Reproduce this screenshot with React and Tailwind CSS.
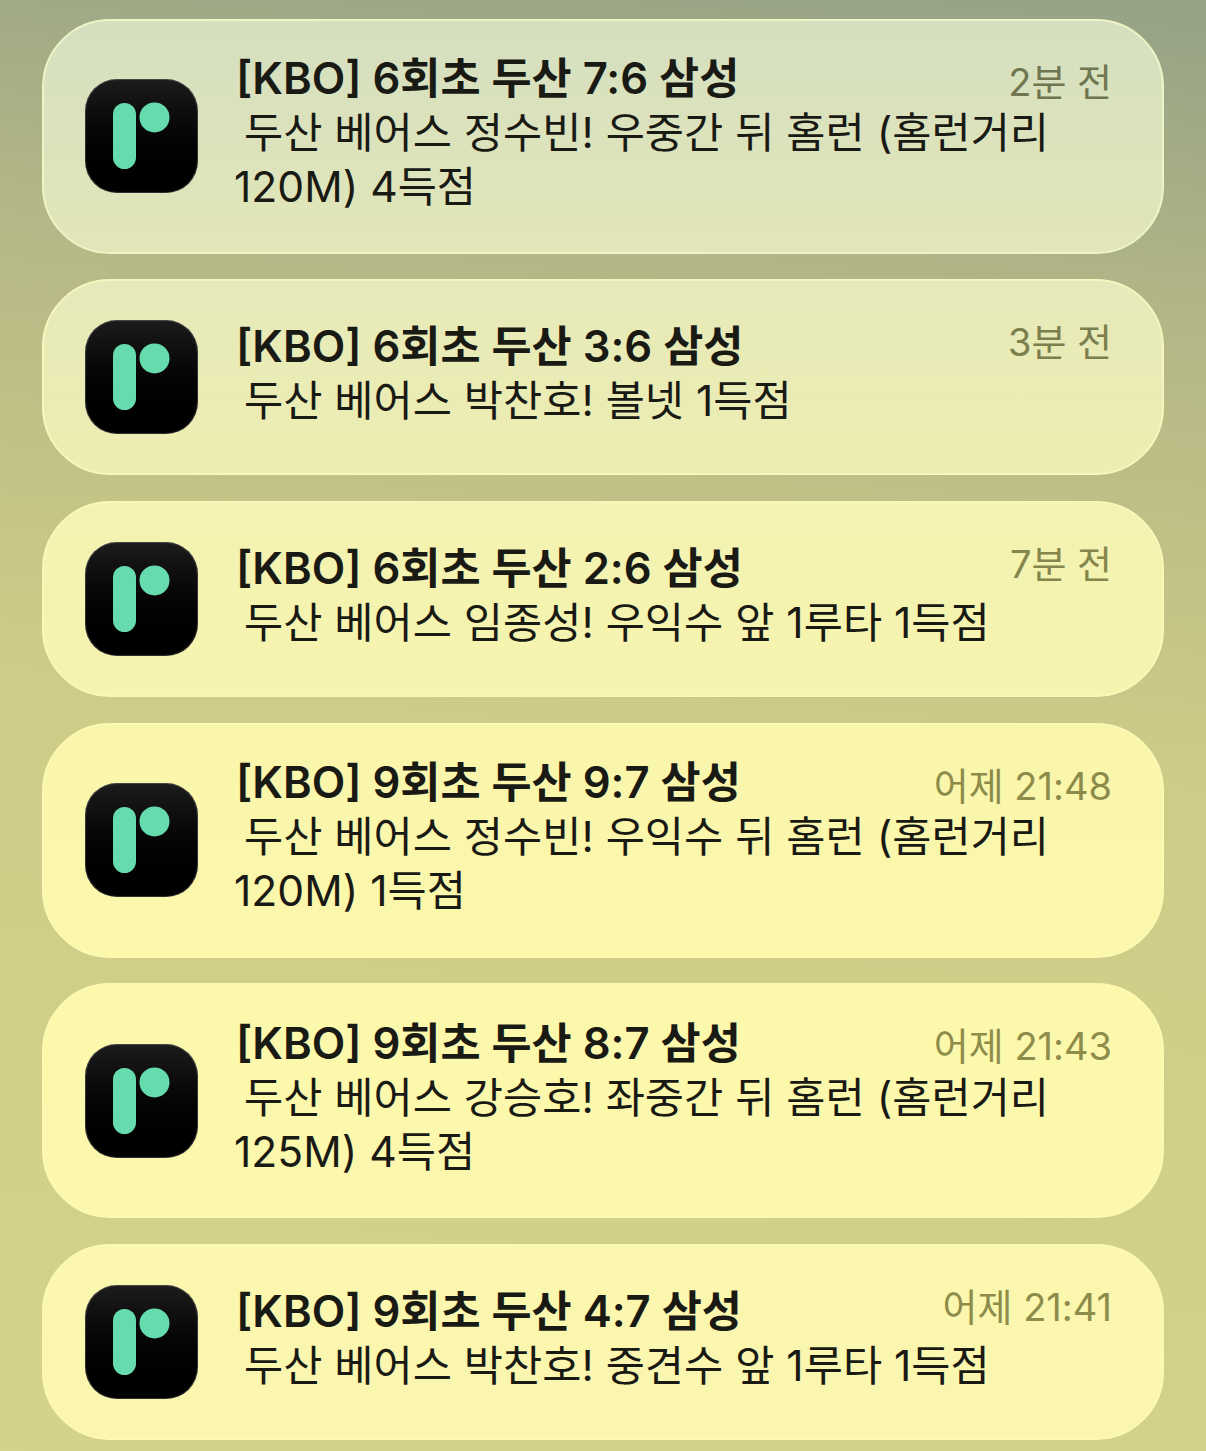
import React from "react";

const notifications = [
  {
    title: "[KBO] 6회초 두산 7:6 삼성",
    body: " 두산 베어스 정수빈! 우중간 뒤 홈런 (홈런거리 120M) 4득점",
    time: "2분 전",
    card: "from-[#d5dfc0] to-[#e2e6b8] border-[#edf4c6]",
    timeColor: "text-[#6f7650]",
  },
  {
    title: "[KBO] 6회초 두산 3:6 삼성",
    body: " 두산 베어스 박찬호! 볼넷 1득점",
    time: "3분 전",
    card: "from-[#e6e9b9] to-[#eeeeb2] border-[#f5f7bf]",
    timeColor: "text-[#7b7f4e]",
  },
  {
    title: "[KBO] 6회초 두산 2:6 삼성",
    body: " 두산 베어스 임종성! 우익수 앞 1루타 1득점",
    time: "7분 전",
    card: "from-[#f3f2b2] to-[#f6f4ae] border-[#f9f8b9]",
    timeColor: "text-[#85864c]",
  },
  {
    title: "[KBO] 9회초 두산 9:7 삼성",
    body: " 두산 베어스 정수빈! 우익수 뒤 홈런 (홈런거리 120M) 1득점",
    time: "어제 21:48",
    card: "from-[#f9f6ac] to-[#fbf7ab] border-[#fbf9b2]",
    timeColor: "text-[#8c8b4a]",
  },
  {
    title: "[KBO] 9회초 두산 8:7 삼성",
    body: " 두산 베어스 강승호! 좌중간 뒤 홈런 (홈런거리 125M) 4득점",
    time: "어제 21:43",
    card: "from-[#fcf8ab] to-[#fbf7ad] border-[#fcf9b2]",
    timeColor: "text-[#8e8c4a]",
  },
  {
    title: "[KBO] 9회초 두산 4:7 삼성",
    body: " 두산 베어스 박찬호! 중견수 앞 1루타 1득점",
    time: "어제 21:41",
    card: "from-[#fbf7ae] to-[#faf6b0] border-[#fcf9b6]",
    timeColor: "text-[#8e8c4a]",
  },
];

function AppIcon() {
  return (
    <div className="w-[113px] h-[114px] shrink-0 rounded-[32px] bg-gradient-to-b from-[#1c1c1c] to-black shadow-[inset_0_0_1px_1px_rgba(255,255,255,0.2)]">
      <svg width="113" height="114" viewBox="0 0 113 114">
        <rect x="28" y="24" width="23" height="66" rx="11.5" fill="#66dcae" />
        <circle cx="69.5" cy="38.4" r="15" fill="#66dcae" />
      </svg>
    </div>
  );
}

function NotificationCard({ title, body, time, card, timeColor }) {
  return (
    <div
      className={`relative flex items-center gap-[36px] min-h-[196px] py-[31.5px] pl-[41px] pr-[52px] rounded-[68px] border-2 bg-gradient-to-b ${card}`}
    >
      <AppIcon />
      <div className="flex-1 min-w-0 pb-[6px] text-[#1a1a14]">
        <div className="text-[43.6px] leading-[54px] font-semibold pl-[2px]">
          {title}
        </div>
        <div className="text-[42.6px] leading-[54px] whitespace-pre-wrap break-keep indent-[-2px]">
          {body}
        </div>
      </div>
      {/* timestamp stays pinned to the top corner, over the text column */}
      <div
        className={`absolute top-[36px] right-[50px] text-[38px] leading-[50px] ${timeColor}`}
      >
        {time}
      </div>
    </div>
  );
}

export default function App() {
  return (
    <div
      className="min-h-[1451px] flex flex-col gap-[25.7px] pt-[18.5px] px-[42px] overflow-hidden bg-[linear-gradient(186deg,#94a286_0%,#b3b686_20%,#cfcc88_50%,#d5d28a_100%)]"
      style={{ fontFamily: '"Inter", "Noto Sans CJK KR", sans-serif' }}
    >
      {notifications.map((n, i) => (
        <NotificationCard key={i} {...n} />
      ))}
    </div>
  );
}
